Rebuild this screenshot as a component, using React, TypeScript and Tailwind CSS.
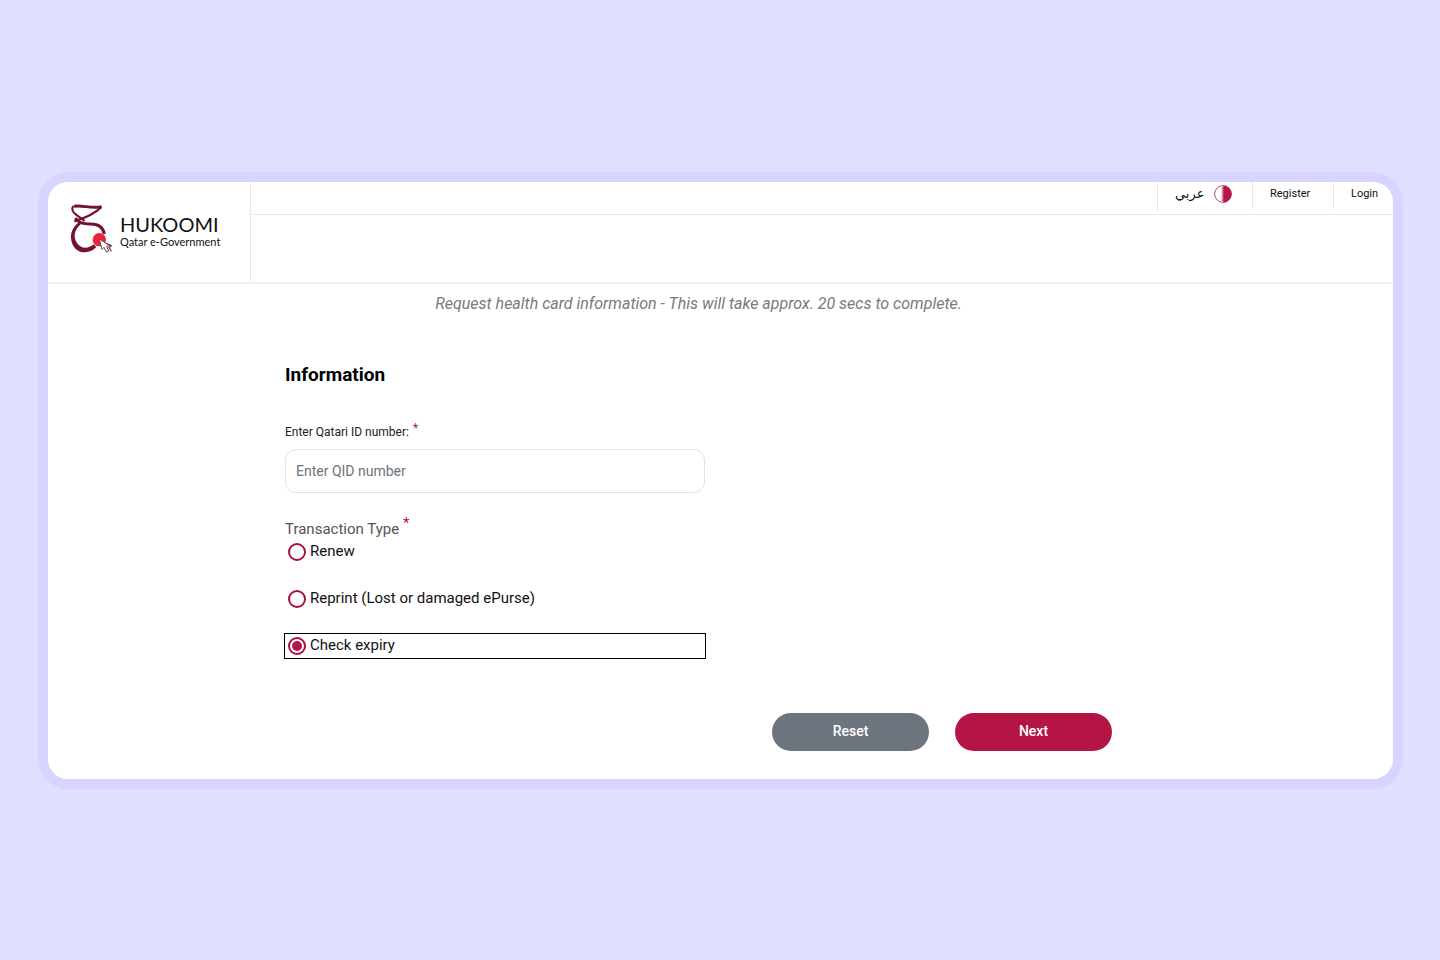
import { useState } from "react";

const transactionTypes = [
  { value: "renew", label: "Renew" },
  { value: "reprint", label: "Reprint (Lost or damaged ePurse)" },
  { value: "expiry", label: "Check expiry" },
];

function HukoomiMark() {
  return (
    <svg viewBox="120 112 129 150" className="h-[50px] w-[43px] shrink-0" fill="none" aria-hidden="true">
      <path d="M132 122 C155 118 185 129 215 123" stroke="#741331" strokeWidth="9" />
      <path d="M130 121 C124 128 127 139 138 147 C146 153 155 159 164 166" stroke="#741331" strokeWidth="6" />
      <path d="M214 124 C196 143 165 157 133 167" stroke="#741331" strokeWidth="7" />
      <path d="M136 157 C144 170 160 175 178 175 C202 174 219 182 223 205" stroke="#741331" strokeWidth="9" />
      <path
        d="M152 166 C132 180 122 195 123 217 C125 247 145 261 165 260 C179 259 190 254 199 244 L191 236 C174 251 153 250 141 232 C129 214 131 192 157 171Z"
        fill="#741331"
      />
      <circle cx="208" cy="222" r="20" fill="#ee2337" />
      <path
        d="M208 220 L216 251 L222 245 L229 259 L236 256 L230 242 L240 240Z"
        fill="#fff"
        stroke="#6b4650"
        strokeWidth="3"
        strokeLinejoin="round"
      />
      <path d="M231 234 L244 240 L237 246 L244 257" stroke="#6b4650" strokeWidth="4" />
    </svg>
  );
}

function QatarFlag() {
  return (
    <svg viewBox="0 0 18 18" className="size-[18px]" aria-hidden="true">
      <circle cx="9" cy="9" r="8.4" fill="#fff" stroke="#b51548" strokeWidth="0.8" />
      <path
        d="M9 0.4 A8.6 8.6 0 0 1 9 17.6 L9.5 16 L7 15 L10 14 L7 13 L10 12 L7 11 L10 10 L7 9 L10 8 L7 7 L10 6 L7 5 L10 4 L7 3 L9.5 2Z"
        fill="#b51548"
      />
    </svg>
  );
}

function Header() {
  return (
    <header className="flex h-[102px] border-b-2 border-[#f0f0f0]">
      <a href="#" className="flex w-[203px] shrink-0 items-center gap-[7px] border-r border-[#e8e8e8] pl-[22px] pb-2">
        <HukoomiMark />
        <span className="flex flex-col pt-2 text-[#111] font-['Lato','Open_Sans',sans-serif]">
          <span className="text-[20px] leading-5">HUKOOMI</span>
          <span className="text-[11px] leading-4">Qatar e-Government</span>
        </span>
      </a>
      <div className="flex-1">
        <nav className="flex h-[33px] justify-end border-b border-[#e8e8e8] text-[11px] leading-6 text-[#111]">
          <a href="#" className="flex h-[29px] w-[95px] items-start gap-[10px] border-l border-[#e8e8e8] pl-[17px]">
            <span lang="ar" dir="rtl" className="text-[13px] font-['DejaVu_Sans',sans-serif]">عربي</span>
            <span className="pt-[3px]">
              <QatarFlag />
            </span>
          </a>
          <a href="#" className="h-[27px] w-[81px] border-l border-[#e8e8e8] pl-[17px]">Register</a>
          <a href="#" className="h-[27px] w-[60px] border-l border-[#e8e8e8] pl-[17px]">Login</a>
        </nav>
      </div>
    </header>
  );
}

export default function App() {
  const [qid, setQid] = useState("");
  const [type, setType] = useState("expiry");

  const reset = () => {
    setQid("");
    setType("");
  };

  return (
    <div className="flex min-h-screen items-center bg-[#dfe0ff] pl-[38px] pr-[37px] font-['Roboto','Noto_Sans',sans-serif]">
      <div className="w-full rounded-[30px] bg-[#d6d5ff] p-[10px]">
        <div className="overflow-hidden rounded-[20px] bg-white">
          <Header />
          <main className="pt-2 pr-[44px] pb-7">
            <form className="mx-auto max-w-[827px]" onSubmit={(e) => e.preventDefault()}>
              <p className="text-center text-[16px] italic leading-6 text-[#7a7a7a]">
                Request health card information - This will take approx. 20 secs to complete.
              </p>
              <h1 className="mt-[44px] text-[19px] font-bold leading-[30px] text-black">Information</h1>

              <div className="mt-8 max-w-[420px]">
                <label htmlFor="qid" className="flex h-5 gap-1 text-[12px] leading-5 text-[#222]">
                  Enter Qatari ID number:
                  <span className="leading-3 text-[#b51548]">*</span>
                </label>
                <input
                  id="qid"
                  type="text"
                  value={qid}
                  onChange={(e) => setQid(e.target.value)}
                  placeholder="Enter QID number"
                  className="mt-[7px] h-[44px] w-full rounded-[11px] border border-[#e2e2e2] px-[10px] text-[14px] text-[#222] placeholder-[#6c757d]"
                />
              </div>

              <fieldset className="mt-6 max-w-[420px]">
                <legend className="flex h-[23px] gap-1 text-[15px] leading-6 text-[#555]">
                  Transaction Type
                  <span className="leading-3 text-[#b51548]">*</span>
                </legend>
                <div className="flex flex-col gap-[23px]">
                  {transactionTypes.map((t) => (
                    <label
                      key={t.value}
                      className="flex h-6 items-center gap-1 pl-[3px] text-[15px] text-[#111] has-checked:outline has-checked:outline-black"
                    >
                      <input
                        type="radio"
                        name="transaction"
                        value={t.value}
                        checked={type === t.value}
                        onChange={() => setType(t.value)}
                        className="flex size-[18px] appearance-none items-center justify-center rounded-full border-2 border-[#a8123f] bg-white checked:before:size-[10px] checked:before:rounded-full checked:before:bg-[#b51548]"
                      />
                      {t.label}
                    </label>
                  ))}
                </div>
              </fieldset>

              <div className="mt-[55px] flex justify-end gap-[26px] text-[14px] font-medium text-white">
                <button type="button" onClick={reset} className="h-[38px] w-[157px] rounded-full bg-[#6c757d]">
                  Reset
                </button>
                <button type="submit" className="h-[38px] w-[157px] rounded-full bg-[#b51545]">
                  Next
                </button>
              </div>
            </form>
          </main>
        </div>
      </div>
    </div>
  );
}
